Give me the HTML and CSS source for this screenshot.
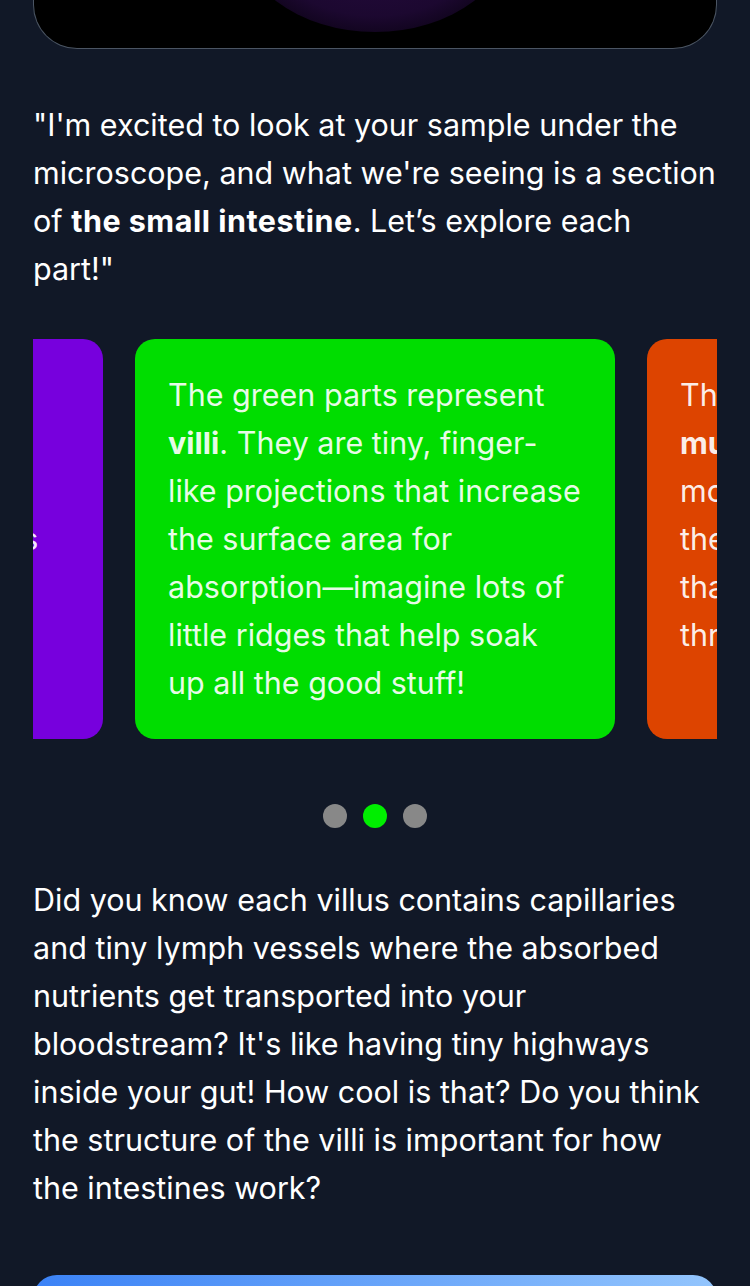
FILE: index.html
```html
<!DOCTYPE html>
<html lang="en">
<head>
<meta charset="utf-8">
<title>Small intestine</title>
<link rel="stylesheet" href="styles.css">
</head>
<body>
<main class="page">
  <div class="media-card"><div class="glow"></div></div>

  <p class="intro">"I'm excited to look at your sample under the microscope, and what we're seeing is a section of <strong>the small intestine</strong>. Let’s explore each part!"</p>

  <div class="carousel">
    <div class="slide slide-purple"><p>The purple regions<br>show the <strong>crypts</strong>, tiny<br>pockets where lots of<br>new cells grow in bunches<br>to replace old ones<br>every few days.</p></div>
    <div class="slide slide-green"><p>The green parts represent <strong>villi</strong>. They are tiny, finger-like projections that increase the surface area for absorption—imagine lots of little ridges that help soak up all the good stuff!</p></div>
    <div class="slide slide-orange"><p>The orange ring is the <strong>muscularis mucosa</strong>, which moves and shifts gently so the villi can touch the food that gets squeezed along through your gut!</p></div>
  </div>

  <div class="dots">
    <span class="dot"></span>
    <span class="dot dot-active"></span>
    <span class="dot"></span>
  </div>

  <p class="body-text">Did you know each villus contains capillaries and tiny lymph vessels where the absorbed nutrients get transported into your bloodstream? It's like having tiny highways inside your gut! How cool is that? Do you think the structure of the villi is important for how the intestines work?</p>

  <div class="cta"></div>
</main>
</body>
</html>
```

FILE: styles.css
```css
html, body {
  margin: 0;
  padding: 0;
  background: #111827;
}

body {
  font-family: Inter, "Noto Sans", sans-serif;
  color: #ffffff;
}

.page {
  padding: 0 33px;
  display: flex;
  flex-direction: column;
}

.media-card {
  height: 48px;
  background: #000;
  border: 1px solid #4b5563;
  border-top: none;
  border-radius: 0 0 44px 44px;
  position: relative;
  overflow: hidden;
}

.glow {
  position: absolute;
  left: 50%;
  top: -180px;
  width: 280px;
  height: 212px;
  transform: translateX(-50%);
  border-radius: 50%;
  background: radial-gradient(ellipse at center, #2a0c44 0%, #1c0830 60%, rgba(10, 2, 20, 0.6) 85%, rgba(0,0,0,0) 100%);
}

.intro,
.body-text {
  font-size: 30.5px;
  line-height: 48px;
  margin: 0;
}

.intro {
  margin-top: 52px;
}

.intro strong {
  letter-spacing: 0.5px;
}

strong {
  font-weight: 700;
}

.carousel {
  margin-top: 46px;
  display: flex;
  justify-content: center;
  gap: 32px;
  overflow: hidden;
}

.slide {
  flex: 0 0 480px;
  box-sizing: border-box;
  padding: 32px 33px;
  border-radius: 20px;
  color: rgba(255, 255, 255, 0.92);
  font-size: 30.5px;
  line-height: 48px;
}

.slide p {
  margin: 0;
}

.slide-purple { background: #7700dd; }
.slide-green { background: #00dd00; }
.slide-orange { background: #dd4400; }

.dots {
  margin-top: 65px;
  display: flex;
  justify-content: center;
  gap: 16px;
}

.dot {
  width: 24px;
  height: 24px;
  border-radius: 50%;
  background: #888888;
}

.dot-active {
  background: #00ee00;
}

.body-text {
  margin-top: 48px;
  margin-right: 2px;
}

.cta {
  margin-top: 63px;
  height: 80px;
  border-radius: 24px;
  background: linear-gradient(90deg, #3b82f6 0%, #93c5fd 100%);
}
```
